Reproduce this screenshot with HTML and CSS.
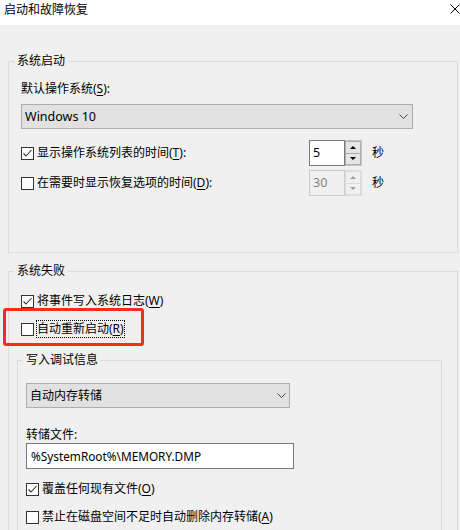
FILE: index.html
```html
<!DOCTYPE html>
<html lang="zh-CN">
<head>
<meta charset="utf-8">
<title>启动和故障恢复</title>
<link rel="stylesheet" href="styles.css">
</head>
<body>
<div class="window">
  <div class="titlebar">
    <span class="title">启动和故障恢复</span>
    <svg class="close" width="10" height="10" viewBox="0 0 10 10"><path d="M0.5 0.5L9.5 9.5M9.5 0.5L0.5 9.5" stroke="#000" stroke-width="1" fill="none"/></svg>
  </div>
  <div class="client">
    <fieldset class="group g1">
      <legend>系统启动</legend>
      <div class="g1-body">
        <div class="label">默认操作系统(<u>S</u>):</div>
        <div class="select sel1">
          <span class="latin">Windows 10</span>
          <svg width="9" height="5" viewBox="0 0 9 5"><path d="M0.5 0.5L4.5 4.5L8.5 0.5" fill="none" stroke="#444" stroke-width="1"/></svg>
        </div>
        <div class="spin-row r1">
          <div class="check">
            <span class="box"><svg width="11" height="11" viewBox="0 0 11 11"><path d="M1.5 5.5L4 8L9.5 2" fill="none" stroke="#333" stroke-width="1.1"/></svg></span>
            <span class="cap">显示操作系统列表的时间(<u>T</u>):</span>
          </div>
          <div class="spin">
            <div class="spin-field latin">5</div>
            <div class="spin-btns">
              <div class="sb"><i class="up"></i></div>
              <div class="sb"><i class="down"></i></div>
            </div>
          </div>
          <span class="sec">秒</span>
        </div>
        <div class="spin-row r2">
          <div class="check">
            <span class="box"></span>
            <span class="cap">在需要时显示恢复选项的时间(<u>D</u>):</span>
          </div>
          <div class="spin disabled">
            <div class="spin-field latin">30</div>
            <div class="spin-btns">
              <div class="sb"><i class="up"></i></div>
              <div class="sb"><i class="down"></i></div>
            </div>
          </div>
          <span class="sec">秒</span>
        </div>
      </div>
    </fieldset>
    <fieldset class="group g2">
      <legend>系统失败</legend>
      <div class="g2-body">
        <div class="check c1">
          <span class="box"><svg width="11" height="11" viewBox="0 0 11 11"><path d="M1.5 5.5L4 8L9.5 2" fill="none" stroke="#333" stroke-width="1.1"/></svg></span>
          <span class="cap">将事件写入系统日志(<u>W</u>)</span>
        </div>
        <div class="check c2">
          <span class="box"></span>
          <span class="cap focus">自动重新启动(<u>R</u>)</span>
        </div>
        <fieldset class="group g3">
          <legend>写入调试信息</legend>
          <div class="g3-body">
            <div class="select sel2">
              <span>自动内存转储</span>
              <svg width="9" height="5" viewBox="0 0 9 5"><path d="M0.5 0.5L4.5 4.5L8.5 0.5" fill="none" stroke="#444" stroke-width="1"/></svg>
            </div>
            <div class="label dump-label">转储文件:</div>
            <div class="textbox">%SystemRoot%\MEMORY.DMP</div>
            <div class="check c3">
              <span class="box"><svg width="11" height="11" viewBox="0 0 11 11"><path d="M1.5 5.5L4 8L9.5 2" fill="none" stroke="#333" stroke-width="1.1"/></svg></span>
              <span class="cap">覆盖任何现有文件(<u>O</u>)</span>
            </div>
            <div class="check c4">
              <span class="box"></span>
              <span class="cap">禁止在磁盘空间不足时自动删除内存转储(<u>A</u>)</span>
            </div>
          </div>
        </fieldset>
      </div>
    </fieldset>
  </div>
  <div class="annot"></div>
</div>
</body>
</html>
```
FILE: styles.css
```css
* { box-sizing: border-box; }
html, body { margin: 0; padding: 0; }
body {
  font-family: "Noto Sans", "Noto Sans CJK SC", sans-serif;
  font-size: 12px;
  line-height: 16px;
  color: #000;
  background: #f0f0f0;
}
u { text-decoration: underline; text-underline-offset: 2px; }
.window {
  position: relative;
  width: 460px;
  height: 530px;
  overflow: hidden;
  background: #f0f0f0;
}
.titlebar {
  display: flex;
  align-items: flex-start;
  height: 25px;
  padding-left: 4px;
  background: #fff;
}
.title { margin-top: 2px; }
.close { margin: 4px 0 0 auto; flex: none; }
.client {
  display: flex;
  flex-direction: column;
  padding: 28px 2px 0 8px;
}
fieldset.group {
  margin: 0;
  padding: 0;
  min-width: 0;
  border: 1px solid #dcdcdc;
}
fieldset.g2 { margin-top: 10px; }
fieldset.g3 { margin-top: 15px; }
legend {
  margin-left: 5px;
  padding: 0 3px;
  line-height: 16px;
}
.g1-body { padding: 12px 12px 56px 12px; }
.select {
  display: flex;
  align-items: center;
  justify-content: space-between;
  height: 25px;
  border: 1px solid #adadad;
  background: #e1e1e1;
  padding: 0 4px 0 3px;
}
.sel1 { width: 392px; margin-top: 7px; }
.spin-row {
  display: grid;
  grid-template-columns: 288px 53px auto;
  align-items: center;
  height: 26px;
}
.r1 { margin-top: 11px; }
.r2 { margin-top: 4px; }
.sec { margin-left: 10px; }
.check {
  display: flex;
  align-items: center;
  height: 16px;
}
.box {
  flex: none;
  display: flex;
  align-items: center;
  justify-content: center;
  width: 13px;
  height: 13px;
  border: 1px solid #333;
  background: #fff;
}
.box svg { display: block; }
.cap {
  margin-left: 2px;
  border: 1px solid transparent;
  white-space: nowrap;
}
.cap.focus { border: 1px dotted #000; }
.spin { display: flex; height: 26px; width: 53px; }
.spin-field {
  width: 36px;
  border: 1px solid #7a7a7a;
  background: #fff;
  padding-left: 3px;
  display: flex;
  align-items: center;
}
.spin-btns {
  width: 17px;
  display: flex;
  flex-direction: column;
  border: 1px solid #c4c4c4;
  border-left: none;
  background: #f0f0f0;
}
.sb {
  flex: 1;
  display: flex;
  align-items: center;
  justify-content: center;
  border: 1px solid #adadad;
  background: #e5e5e5;
}
.sb + .sb { border-top: none; }
.up, .down {
  display: block;
  width: 0;
  height: 0;
  border-left: 3px solid transparent;
  border-right: 3px solid transparent;
}
.up { border-bottom: 3px solid #000; }
.down { border-top: 3px solid #000; }
.spin.disabled .spin-field {
  border-color: #cccccc;
  background: #f0f0f0;
  color: #838383;
}
.spin.disabled .spin-btns { border-color: #dcdcdc; }
.spin.disabled .sb { border-color: #dcdcdc; background: #f0f0f0; }
.spin.disabled .up { border-bottom-color: #a0a0a0; }
.spin.disabled .down { border-top-color: #a0a0a0; }
.g2-body { padding: 14px 15px 0 8px; }
.g2-body > .check { margin-left: 4px; }
.c2 { margin-top: 12px; }
.g3-body { padding: 15px 8px 30px 8px; }
.sel2 { width: 264px; padding-right: 3px; }
.dump-label { margin-top: 19px; }
.textbox {
  width: 268px;
  height: 26px;
  border: 1px solid #7a7a7a;
  background: #fff;
  padding-left: 4px;
  display: flex;
  align-items: center;
  font-size: 11.8px;
}
.c3 { margin-top: 12px; }
.c4 { margin-top: 12px; }
.latin { font-size: 12.5px; }
.annot {
  position: absolute;
  left: 3px;
  top: 308px;
  width: 141px;
  height: 38px;
  border: 3px solid #fa2a1f;
  border-radius: 3px;
}
```
